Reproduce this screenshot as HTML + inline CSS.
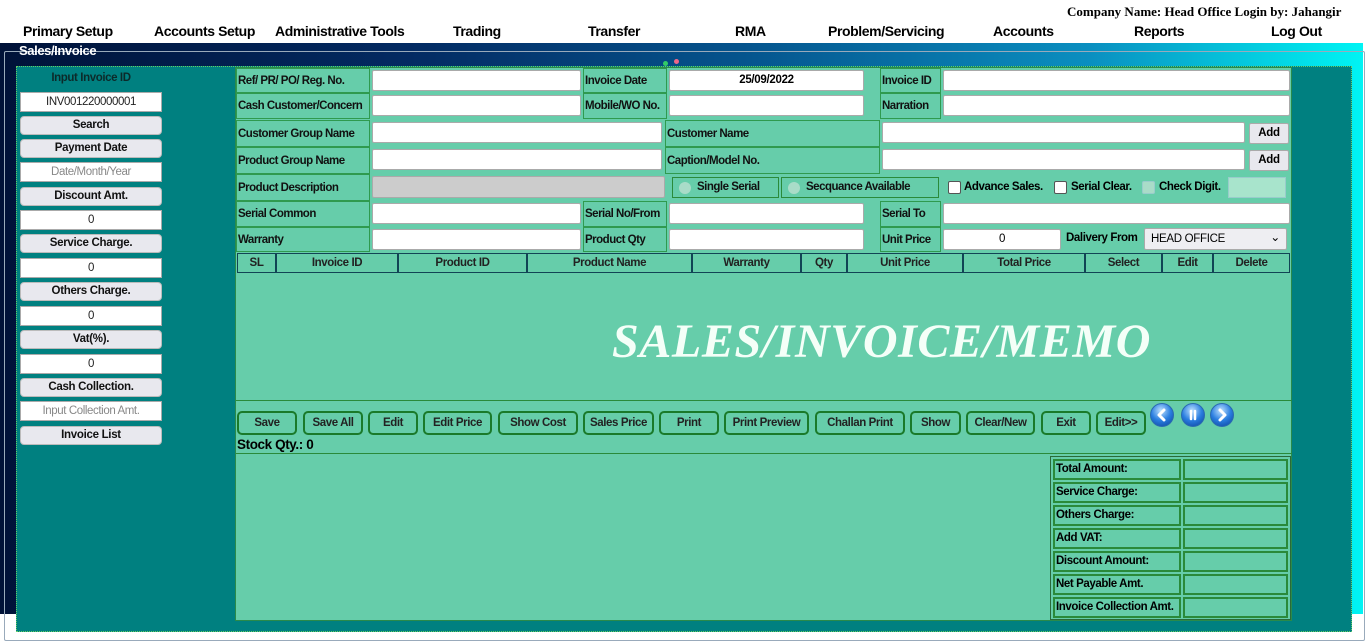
<!DOCTYPE html>
<html><head><meta charset="utf-8"><style>
*{box-sizing:border-box;margin:0;padding:0}
body{width:1366px;height:643px;overflow:hidden;background:#fff;font-family:"Liberation Sans",Arial,sans-serif;position:relative;white-space:nowrap}
.a{position:absolute}
.top{font-family:"Liberation Serif",serif;font-weight:bold;font-size:13px;left:1067px;top:4px}
.m{position:absolute;top:23px;font-weight:bold;font-size:14px;color:#000;letter-spacing:-0.4px}
#bg{left:0;top:43px;width:1363px;height:571px;background:linear-gradient(to right,#001238 0%,#032a62 30%,#05558e 55%,#0a8fc0 80%,#00f4f4 100%)}
#fs{left:4px;top:51px;width:1361px;height:590px;border:1px solid #9ab;border-radius:2px}
#leg{left:16px;top:43px;color:#fff;font-weight:bold;font-size:13px;padding:0 3px;letter-spacing:-0.4px}
#teal{left:16px;top:66px;width:1336px;height:566px;background:#008080;border:1px dotted #6c6}
#green{left:235px;top:67px;width:1057px;height:554px;background:#66cdaa;border:1px solid #2a8a4a}
.l{position:absolute;font-size:11.5px;font-weight:bold;color:#111;line-height:24px;padding-left:1px;border:1px solid #2f9a4f;letter-spacing:-0.5px;overflow:hidden}
.i{position:absolute;background:#fff;border:1px solid #aaa;border-radius:2px;font-size:11.5px;text-align:center;line-height:19px;height:21px;letter-spacing:-0.3px}
.lb{position:absolute;left:20px;width:142px;height:19px;background:#e8e8ee;border:1px solid #bbb;border-radius:4px;font-size:11.5px;font-weight:bold;text-align:center;line-height:17px;color:#111;letter-spacing:-0.3px}
.li{position:absolute;left:20px;width:142px;height:20px;background:#fff;border:1px solid #aaa;font-size:11.5px;text-align:center;line-height:18px;color:#222;letter-spacing:-0.4px}
.ph{color:#888}
.th{position:absolute;top:253px;height:20px;border:1px solid #145;font-size:11.5px;font-weight:bold;text-align:center;line-height:18px;color:#222;letter-spacing:-0.4px}
.bt{position:absolute;top:411px;height:24px;border:2px solid #1a7a2a;border-radius:5px;font-size:11.5px;font-weight:bold;text-align:center;line-height:20px;color:#222;background:#66cdaa;letter-spacing:-0.4px}
.sl{position:absolute;left:1053px;width:128px;height:21px;border:2px solid #2a8a3a;font-size:11.5px;font-weight:bold;line-height:17px;padding-left:1px;letter-spacing:-0.4px;overflow:hidden}
.sv{position:absolute;left:1183px;width:105px;height:21px;border:2px solid #2a8a3a}
.c{position:absolute;top:403px;width:24px;height:24px;border-radius:50%;background:radial-gradient(circle at 45% 30%,#bfe2ff,#2a7ee0 50%,#0a3f9a);border:1px solid #2a6ab0}
.cb{position:absolute;width:13px;height:13px;background:#fff;border:1px solid #555;border-radius:2px}
.t12{font-size:11.5px;font-weight:bold;letter-spacing:-0.4px}
</style></head><body>
<div class="a top">Company Name: Head Office Login by: Jahangir</div>
<div class="m" style="left:23px">Primary Setup</div>
<div class="m" style="left:154px">Accounts Setup</div>
<div class="m" style="left:275px">Administrative Tools</div>
<div class="m" style="left:453px">Trading</div>
<div class="m" style="left:588px">Transfer</div>
<div class="m" style="left:735px">RMA</div>
<div class="m" style="left:828px">Problem/Servicing</div>
<div class="m" style="left:993px">Accounts</div>
<div class="m" style="left:1134px">Reports</div>
<div class="m" style="left:1271px">Log Out</div>
<div class="a" id="bg"></div>
<div class="a" id="fs"></div>
<div class="a" id="leg">Sales/Invoice</div>
<div class="a" style="left:663px;top:61px;width:5px;height:5px;border-radius:50%;background:#3c6"></div>
<div class="a" style="left:674px;top:59px;width:5px;height:5px;border-radius:50%;background:#e68"></div>
<div class="a" id="teal"></div>
<div class="a" id="green"></div>

<div class="a t12" style="left:20px;top:72px;width:142px;text-align:center;color:#0c2a2a">Input Invoice ID</div>
<div class="li" style="top:92px">INV001220000001</div>
<div class="lb" style="top:116px">Search</div>
<div class="lb" style="top:139px">Payment Date</div>
<div class="li ph" style="top:162px">Date/Month/Year</div>
<div class="lb" style="top:187px">Discount Amt.</div>
<div class="li" style="top:210px">0</div>
<div class="lb" style="top:234px">Service Charge.</div>
<div class="li" style="top:258px">0</div>
<div class="lb" style="top:282px">Others Charge.</div>
<div class="li" style="top:306px">0</div>
<div class="lb" style="top:330px">Vat(%).</div>
<div class="li" style="top:354px">0</div>
<div class="lb" style="top:378px">Cash Collection.</div>
<div class="li ph" style="top:401px">Input Collection Amt.</div>
<div class="lb" style="top:426px">Invoice List</div>

<div class="l" style="left:236px;top:68px;width:134px;height:25px">Ref/ PR/ PO/ Reg. No.</div>
<div class="i" style="left:372px;top:70px;width:209px"></div>
<div class="l" style="left:583px;top:68px;width:84px;height:25px">Invoice Date</div>
<div class="i" style="left:669px;top:70px;width:195px;font-weight:bold">25/09/2022</div>
<div class="l" style="left:880px;top:68px;width:61px;height:25px">Invoice ID</div>
<div class="i" style="left:943px;top:70px;width:347px"></div>
<div class="l" style="left:236px;top:93px;width:134px;height:26px">Cash Customer/Concern</div>
<div class="i" style="left:372px;top:95px;width:209px"></div>
<div class="l" style="left:583px;top:93px;width:84px;height:26px">Mobile/WO No.</div>
<div class="i" style="left:669px;top:95px;width:195px"></div>
<div class="l" style="left:880px;top:93px;width:61px;height:26px">Narration</div>
<div class="i" style="left:943px;top:95px;width:347px"></div>
<div class="l" style="left:236px;top:120px;width:134px;height:27px;line-height:27px">Customer Group Name</div>
<div class="i" style="left:372px;top:122px;width:290px"></div>
<div class="l" style="left:665px;top:120px;width:215px;height:27px;line-height:27px">Customer Name</div>
<div class="i" style="left:882px;top:122px;width:363px"></div>
<div class="i" style="left:1249px;top:123px;width:40px;background:#e8e8ee;font-weight:bold">Add</div>
<div class="l" style="left:236px;top:147px;width:134px;height:27px;line-height:27px">Product Group Name</div>
<div class="i" style="left:372px;top:149px;width:290px"></div>
<div class="l" style="left:665px;top:147px;width:215px;height:27px;line-height:27px">Caption/Model No.</div>
<div class="i" style="left:882px;top:149px;width:363px"></div>
<div class="i" style="left:1249px;top:150px;width:40px;background:#e8e8ee;font-weight:bold">Add</div>
<div class="l" style="left:236px;top:174px;width:134px;height:27px;line-height:27px">Product Description</div>
<div class="i" style="left:372px;top:176px;width:293px;height:22px;background:#ccc"></div>
<div class="l" style="left:672px;top:177px;width:107px;height:21px;line-height:19px;padding-left:24px;border:1px solid #2a8a3a">Single Serial</div>
<div class="a" style="left:679px;top:182px;width:12px;height:12px;border-radius:50%;background:#a9dcc8"></div>
<div class="l" style="left:781px;top:177px;width:158px;height:21px;line-height:19px;padding-left:24px;border:1px solid #2a8a3a">Secquance Available</div>
<div class="a" style="left:788px;top:182px;width:12px;height:12px;border-radius:50%;background:#a9dcc8"></div>
<div class="cb" style="left:948px;top:181px"></div>
<div class="a t12" style="left:964px;top:181px">Advance Sales.</div>
<div class="cb" style="left:1054px;top:181px"></div>
<div class="a t12" style="left:1071px;top:181px">Serial Clear.</div>
<div class="cb" style="left:1142px;top:181px;background:#a9dcc8;border-color:#9cc"></div>
<div class="a t12" style="left:1159px;top:181px">Check Digit.</div>
<div class="a" style="left:1228px;top:177px;width:58px;height:21px;background:#a8e4cc;border:1px solid #9cc"></div>
<div class="l" style="left:236px;top:201px;width:134px;height:26px">Serial Common</div>
<div class="i" style="left:372px;top:203px;width:209px"></div>
<div class="l" style="left:583px;top:201px;width:84px;height:26px">Serial No/From</div>
<div class="i" style="left:669px;top:203px;width:195px"></div>
<div class="l" style="left:880px;top:201px;width:61px;height:26px">Serial To</div>
<div class="i" style="left:943px;top:203px;width:347px"></div>
<div class="l" style="left:236px;top:227px;width:134px;height:25px">Warranty</div>
<div class="i" style="left:372px;top:229px;width:209px"></div>
<div class="l" style="left:583px;top:227px;width:84px;height:25px">Product Qty</div>
<div class="i" style="left:669px;top:229px;width:195px"></div>
<div class="l" style="left:880px;top:227px;width:61px;height:25px">Unit Price</div>
<div class="i" style="left:943px;top:229px;width:118px">0</div>
<div class="a t12" style="left:1066px;top:232px">Dalivery From</div>
<div class="i" style="left:1144px;top:228px;width:143px;height:22px;background:#eeeef2;text-align:left;padding-left:6px;line-height:20px">HEAD OFFICE<span style="position:absolute;right:6px;top:-2px;font-size:12px">&#8964;</span></div>

<div class="th" style="left:237px;width:39px">SL</div>
<div class="th" style="left:276px;width:122px">Invoice ID</div>
<div class="th" style="left:398px;width:129px">Product ID</div>
<div class="th" style="left:527px;width:165px">Product Name</div>
<div class="th" style="left:692px;width:109px">Warranty</div>
<div class="th" style="left:801px;width:46px">Qty</div>
<div class="th" style="left:847px;width:116px">Unit Price</div>
<div class="th" style="left:963px;width:122px">Total Price</div>
<div class="th" style="left:1085px;width:77px">Select</div>
<div class="th" style="left:1162px;width:51px">Edit</div>
<div class="th" style="left:1213px;width:77px">Delete</div>
<div class="a" style="left:612px;top:314px;font-family:'Liberation Serif',serif;font-style:italic;font-weight:bold;font-size:48px;color:#f4fff8;letter-spacing:0.6px">SALES/INVOICE/MEMO</div>
<div class="a" style="left:236px;top:400px;width:1056px;height:1px;background:#2a8a3a"></div>

<div class="bt" style="left:237px;width:60px">Save</div>
<div class="bt" style="left:303px;width:60px">Save All</div>
<div class="bt" style="left:368px;width:50px">Edit</div>
<div class="bt" style="left:423px;width:69px">Edit Price</div>
<div class="bt" style="left:498px;width:80px">Show Cost</div>
<div class="bt" style="left:583px;width:71px">Sales Price</div>
<div class="bt" style="left:659px;width:60px">Print</div>
<div class="bt" style="left:724px;width:85px">Print Preview</div>
<div class="bt" style="left:815px;width:90px">Challan Print</div>
<div class="bt" style="left:910px;width:51px">Show</div>
<div class="bt" style="left:966px;width:69px">Clear/New</div>
<div class="bt" style="left:1041px;width:50px">Exit</div>
<div class="bt" style="left:1096px;width:50px">Edit&gt;&gt;</div>
<div class="c" style="left:1150px"><svg width="22" height="22" viewBox="0 0 22 22"><path d="M13 6 L8 11 L13 16" stroke="#fff" stroke-width="3" fill="none" stroke-linecap="round" stroke-linejoin="round"/></svg></div>
<div class="c" style="left:1181px"><svg width="22" height="22" viewBox="0 0 22 22"><path d="M9 7 V15 M13 7 V15" stroke="#fff" stroke-width="2.5" stroke-linecap="round"/></svg></div>
<div class="c" style="left:1210px"><svg width="22" height="22" viewBox="0 0 22 22"><path d="M9 6 L14 11 L9 16" stroke="#fff" stroke-width="3" fill="none" stroke-linecap="round" stroke-linejoin="round"/></svg></div>
<div class="a" style="left:237px;top:437px;font-size:13.5px;font-weight:bold;letter-spacing:-0.4px">Stock Qty.: 0</div>
<div class="a" style="left:236px;top:453px;width:1056px;height:1px;background:#2a8a3a"></div>

<div class="a" style="left:1050px;top:456px;width:241px;height:164px;border:1px solid #2a6a3a"></div>
<div class="sl" style="top:459px">Total Amount:</div><div class="sv" style="top:459px"></div>
<div class="sl" style="top:482px">Service Charge:</div><div class="sv" style="top:482px"></div>
<div class="sl" style="top:505px">Others Charge:</div><div class="sv" style="top:505px"></div>
<div class="sl" style="top:528px">Add VAT:</div><div class="sv" style="top:528px"></div>
<div class="sl" style="top:551px">Discount Amount:</div><div class="sv" style="top:551px"></div>
<div class="sl" style="top:574px">Net Payable Amt.</div><div class="sv" style="top:574px"></div>
<div class="sl" style="top:597px">Invoice Collection Amt.</div><div class="sv" style="top:597px"></div>
</body></html>
